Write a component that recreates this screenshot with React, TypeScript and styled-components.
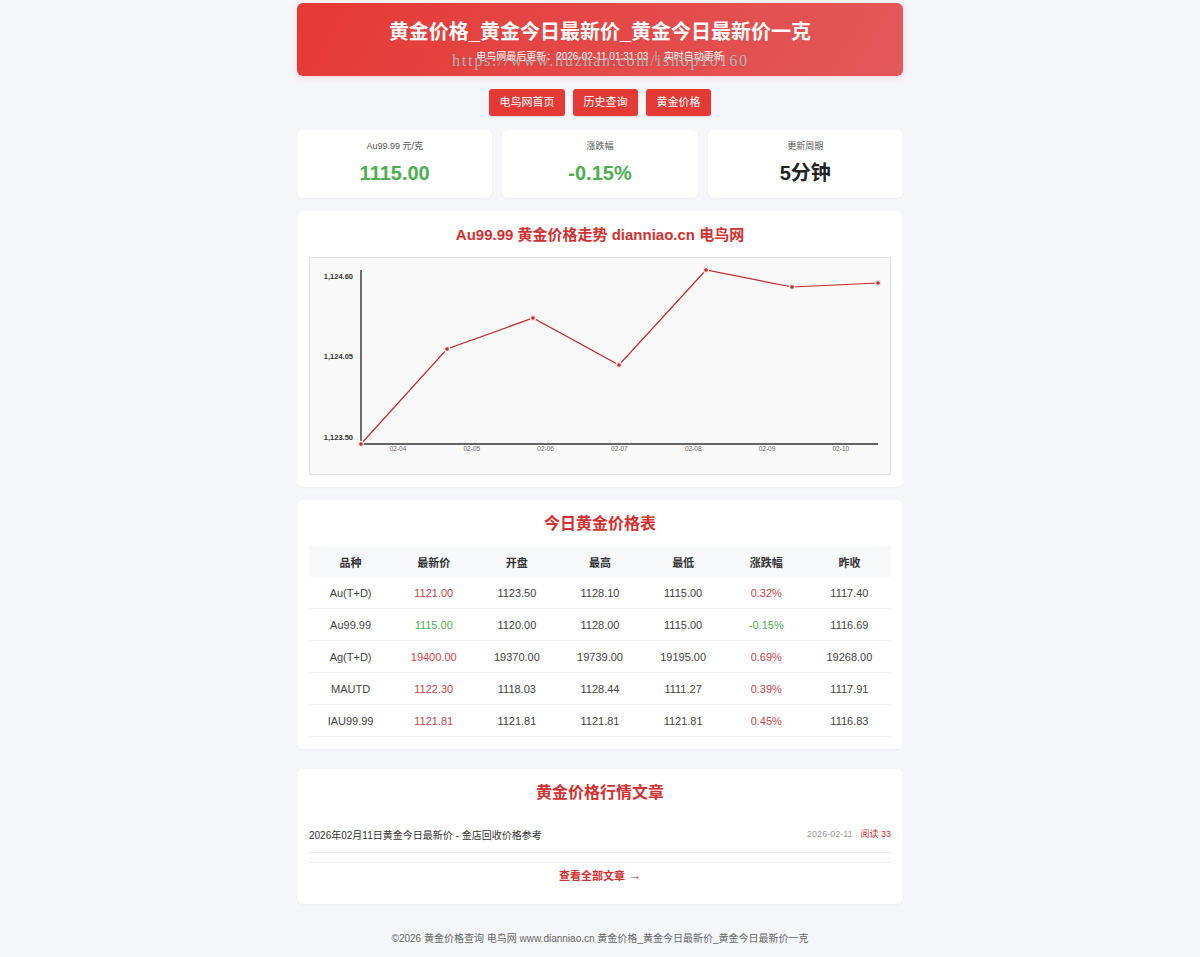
import React from 'react';
import styled, { createGlobalStyle } from 'styled-components';

const GlobalStyle = createGlobalStyle`
  body {
    margin: 0;
    background: #f5f6f9;
    font-family: "Liberation Sans", Arial, "Noto Sans CJK SC", sans-serif;
    color: #333;
  }
`;

const Page = styled.div`
  width: 606px;
  margin: 0 auto;
  padding-top: 3px;
  display: flex;
  flex-direction: column;
`;

const Header = styled.header`
  position: relative;
  height: 73px;
  border-radius: 6px;
  background: linear-gradient(120deg, #e53935 0%, #e4585a 100%);
  color: #fff;
  display: flex;
  flex-direction: column;
  align-items: center;
  box-sizing: border-box;
  padding-top: 17px;
  box-shadow: 0 2px 6px rgba(229, 57, 53, 0.15);
`;

const Title = styled.h1`
  margin: 0;
  font-size: 20px;
  line-height: 24px;
  font-weight: bold;
`;

const SubTitle = styled.div`
  margin-top: 6px;
  font-size: 10px;
  line-height: 14px;
`;

const Watermark = styled.div`
  position: absolute;
  left: 155px;
  top: 49px;
  font-family: "Liberation Serif", "Times New Roman", serif;
  font-size: 16px;
  letter-spacing: 1.75px;
  color: rgba(255, 255, 255, 0.55);
  text-shadow: 0 0 1px rgba(90, 90, 90, 0.8);
  pointer-events: none;
`;

const Nav = styled.nav`
  display: flex;
  justify-content: center;
  gap: 8px;
  margin-top: 13px;
`;

const NavButton = styled.a`
  height: 27px;
  line-height: 27px;
  padding: 0 10.5px;
  background: #e53935;
  color: #fff;
  font-size: 11px;
  border-radius: 3px;
  text-decoration: none;
  box-shadow: 0 1px 2px rgba(0, 0, 0, 0.12);
`;

const Stats = styled.div`
  display: grid;
  grid-template-columns: repeat(3, 1fr);
  gap: 10px;
  margin-top: 14px;
`;

const Card = styled.section`
  background: #fff;
  border-radius: 6px;
  box-shadow: 0 1px 3px rgba(0, 0, 0, 0.04);
`;

const StatCard = styled(Card)`
  height: 68px;
  display: flex;
  flex-direction: column;
  align-items: center;
  box-sizing: border-box;
  padding-top: 10px;
`;

const StatLabel = styled.div`
  font-size: 9px;
  line-height: 12px;
  color: #555;
`;

const StatValue = styled.div<{ $color: string }>`
  margin-top: 9px;
  font-size: 20px;
  line-height: 24px;
  font-weight: bold;
  color: ${(p) => p.$color};
`;

const Panel = styled(Card)<{ $top: number; $bottom?: number }>`
  margin-top: ${(p) => p.$top}px;
  padding: 12px 12px ${(p) => p.$bottom ?? 12}px;
`;

const PanelTitle = styled.h2<{ $size?: number }>`
  margin: 0;
  text-align: center;
  font-size: ${(p) => p.$size ?? 16}px;
  line-height: 24px;
  font-weight: bold;
  color: #d32f2f;
`;

const ChartBox = styled.div`
  margin-top: 10px;
  height: 218px;
  background: #f9f9f9;
  border: 1px solid #e0e0e0;
  box-sizing: border-box;
`;

const Table = styled.table`
  width: 100%;
  margin-top: 10px;
  border-collapse: collapse;
  table-layout: fixed;
  font-size: 11px;
`;

const Th = styled.th`
  height: 31px;
  padding: 0;
  background: #f7f8fa;
  font-weight: bold;
  color: #333;
`;

const Td = styled.td<{ $color?: string }>`
  height: 31px;
  padding: 0;
  text-align: center;
  color: ${(p) => p.$color || '#444'};
  border-bottom: 1px solid #eeeeee;
`;

const ArticleRow = styled.div`
  margin-top: 12px;
  height: 34px;
  display: flex;
  align-items: center;
  justify-content: space-between;
  border-bottom: 1px solid #eeeeee;
  font-size: 10px;
  padding-bottom: 1px;
`;

const ArticleMeta = styled.div`
  display: flex;
  align-items: center;
  gap: 8px;
  font-size: 9px;
  line-height: 14px;
  color: #999;
`;

const ReadCount = styled.span`
  color: #d32f2f;
`;

const MoreLink = styled.a`
  display: block;
  margin-top: 9px;
  padding-top: 5px;
  border-top: 1px solid #eeeeee;
  text-align: center;
  font-size: 11px;
  line-height: 16px;
  font-weight: bold;
  color: #d32f2f;
  text-decoration: none;
`;

const Arrow = styled.span`
  font-size: 13px;
  font-weight: normal;
`;

const Footer = styled.footer`
  margin-top: 26px;
  padding-bottom: 12px;
  text-align: center;
  font-size: 10px;
  color: #666;
`;

const rows = [
  { name: 'Au(T+D)', last: '1121.00', open: '1123.50', high: '1128.10', low: '1115.00', chg: '0.32%', prev: '1117.40', up: true },
  { name: 'Au99.99', last: '1115.00', open: '1120.00', high: '1128.00', low: '1115.00', chg: '-0.15%', prev: '1116.69', up: false },
  { name: 'Ag(T+D)', last: '19400.00', open: '19370.00', high: '19739.00', low: '19195.00', chg: '0.69%', prev: '19268.00', up: true },
  { name: 'MAUTD', last: '1122.30', open: '1118.03', high: '1128.44', low: '1111.27', chg: '0.39%', prev: '1117.91', up: true },
  { name: 'IAU99.99', last: '1121.81', open: '1121.81', high: '1121.81', low: '1121.81', chg: '0.45%', prev: '1116.83', up: true },
];

// chart points in pixels inside the chart box
const points = [
  [51, 186],
  [137, 91],
  [223, 60],
  [309, 107],
  [396, 12],
  [482, 29],
  [568, 25],
];
const xLabels = ['02-04', '02-05', '02-06', '02-07', '02-08', '02-09', '02-10'];

const Chart: React.FC = () => (
  <svg width="579" height="216" viewBox="0 0 579 216">
    <line x1="51" y1="12" x2="51" y2="186" stroke="#222" strokeWidth="1.3" />
    <line x1="51" y1="186" x2="568" y2="186" stroke="#333" strokeWidth="1.3" />
    <g fontFamily="Liberation Sans, Arial, sans-serif" fontSize="7.5" fontWeight="bold" fill="#333" textAnchor="end">
      <text x="43" y="21">1,124.60</text>
      <text x="43" y="101">1,124.05</text>
      <text x="43" y="182">1,123.50</text>
    </g>
    <g fontFamily="Liberation Sans, Arial, sans-serif" fontSize="6.5" fill="#666" textAnchor="middle">
      {xLabels.map((l, i) => (
        <text key={l} x={88 + i * 73.8} y="193">
          {l}
        </text>
      ))}
    </g>
    <polyline
      points={points.map((p) => p.join(',')).join(' ')}
      fill="none"
      stroke="#c62828"
      strokeWidth="1.2"
    />
    {points.map(([x, y]) => (
      <g key={x}>
        <circle cx={x} cy={y} r="3.2" fill="#f3e3e3" />
        <circle cx={x} cy={y} r="1.8" fill="#c62828" />
      </g>
    ))}
  </svg>
);

const App: React.FC = () => {
  return (
    <>
      <GlobalStyle />
      <Page>
        <Header>
          <Title>黄金价格_黄金今日最新价_黄金今日最新价一克</Title>
          <SubTitle>电鸟网最后更新：2026-02-11 01:31:03 ｜ 实时自动更新</SubTitle>
          <Watermark>https://www.huzhan.com/ishop10160</Watermark>
        </Header>

        <Nav>
          <NavButton href="#">电鸟网首页</NavButton>
          <NavButton href="#">历史查询</NavButton>
          <NavButton href="#">黄金价格</NavButton>
        </Nav>

        <Stats>
          <StatCard>
            <StatLabel>Au99.99 元/克</StatLabel>
            <StatValue $color="#4caf50">1115.00</StatValue>
          </StatCard>
          <StatCard>
            <StatLabel>涨跌幅</StatLabel>
            <StatValue $color="#4caf50">-0.15%</StatValue>
          </StatCard>
          <StatCard>
            <StatLabel>更新周期</StatLabel>
            <StatValue $color="#222">5分钟</StatValue>
          </StatCard>
        </Stats>

        <Panel $top={13}>
          <PanelTitle $size={15}>Au99.99 黄金价格走势 dianniao.cn 电鸟网</PanelTitle>
          <ChartBox>
            <Chart />
          </ChartBox>
        </Panel>

        <Panel $top={13}>
          <PanelTitle>今日黄金价格表</PanelTitle>
          <Table>
            <thead>
              <tr>
                <Th>品种</Th>
                <Th>最新价</Th>
                <Th>开盘</Th>
                <Th>最高</Th>
                <Th>最低</Th>
                <Th>涨跌幅</Th>
                <Th>昨收</Th>
              </tr>
            </thead>
            <tbody>
              {rows.map((r) => {
                const c = r.up ? '#cc4444' : '#4caf50';
                return (
                  <tr key={r.name}>
                    <Td>{r.name}</Td>
                    <Td $color={c}>{r.last}</Td>
                    <Td>{r.open}</Td>
                    <Td>{r.high}</Td>
                    <Td>{r.low}</Td>
                    <Td $color={c}>{r.chg}</Td>
                    <Td>{r.prev}</Td>
                  </tr>
                );
              })}
            </tbody>
          </Table>
        </Panel>

        <Panel $top={20} $bottom={20}>
          <PanelTitle>黄金价格行情文章</PanelTitle>
          <ArticleRow>
            <span>2026年02月11日黄金今日最新价 - 金店回收价格参考</span>
            <ArticleMeta>
              <span>2026-02-11</span>
              <ReadCount>阅读 33</ReadCount>
            </ArticleMeta>
          </ArticleRow>
          <MoreLink href="#">
            查看全部文章 <Arrow>→</Arrow>
          </MoreLink>
        </Panel>

        <Footer>©2026 黄金价格查询 电鸟网 www.dianniao.cn 黄金价格_黄金今日最新价_黄金今日最新价一克</Footer>
      </Page>
    </>
  );
};

export default App;
